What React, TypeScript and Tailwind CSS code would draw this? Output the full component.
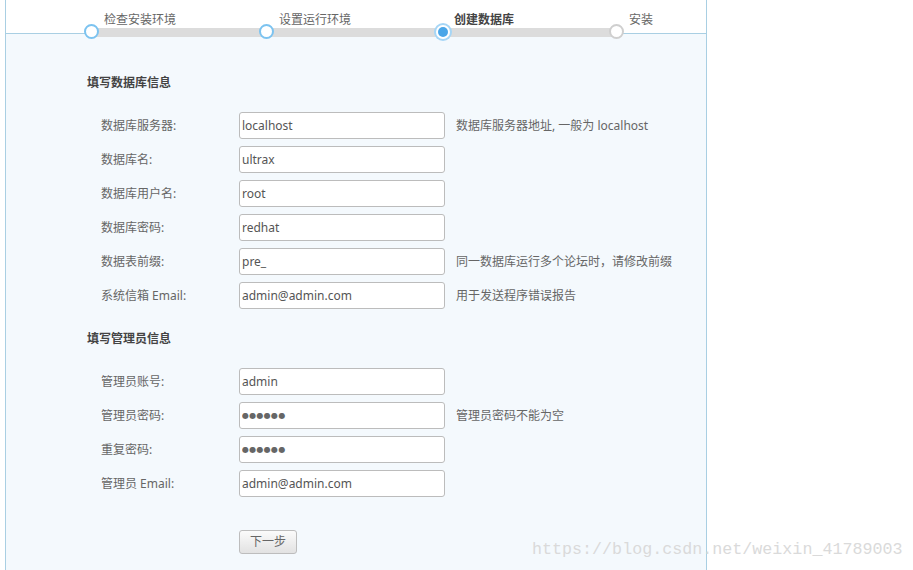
import React from 'react';

const font = { fontFamily: '"Noto Sans", "Noto Sans CJK SC", sans-serif' };

const steps = [
  { label: '检查安装环境', state: 'done' },
  { label: '设置运行环境', state: 'done' },
  { label: '创建数据库', state: 'active' },
  { label: '安装', state: 'todo' },
];

const dbRows = [
  { label: '数据库服务器:', value: 'localhost', hint: '数据库服务器地址, 一般为 localhost' },
  { label: '数据库名:', value: 'ultrax' },
  { label: '数据库用户名:', value: 'root' },
  { label: '数据库密码:', value: 'redhat' },
  { label: '数据表前缀:', value: 'pre_', hint: '同一数据库运行多个论坛时，请修改前缀' },
  { label: '系统信箱 Email:', value: 'admin@admin.com', hint: '用于发送程序错误报告' },
];

const adminRows = [
  { label: '管理员账号:', value: 'admin' },
  { label: '管理员密码:', value: '●●●●●●', password: true, hint: '管理员密码不能为空' },
  { label: '重复密码:', value: '●●●●●●', password: true },
  { label: '管理员 Email:', value: 'admin@admin.com' },
];

function StepDot({ state }: { state: string }) {
  if (state === 'active') {
    return (
      <div className="w-[18px] h-[18px] rounded-full bg-[#a6d6f6] flex items-center justify-center">
        <div className="w-[14px] h-[14px] rounded-full bg-white flex items-center justify-center">
          <div className="w-[10px] h-[10px] rounded-full bg-[#4aa6e8]" />
        </div>
      </div>
    );
  }
  return (
    <div
      className={
        'w-[15px] h-[15px] rounded-full bg-white border-2 ' +
        (state === 'done' ? 'border-[#7cc3f0]' : 'border-[#cfcfcf]')
      }
    />
  );
}

type Row = { label: string; value: string; hint?: string; password?: boolean };

function FormRow({ row }: { row: Row }) {
  return (
    <div className="flex items-center h-[27px] mb-[7px]">
      <div className="w-[138px] pl-[95px] box-content shrink-0 text-[12px] text-[#666] whitespace-nowrap">{row.label}</div>
      <input
        readOnly
        type="text"
        defaultValue={row.value}
        className={
          'w-[206px] h-[27px] shrink-0 border border-[#bcbcbc] rounded-[3px] bg-white px-[2px] outline-none ' +
          (row.password ? 'text-[8px] text-[#666] tracking-[0.3px]' : 'text-[12px] text-[#555]')
        }
        style={row.password ? { fontFamily: '"DejaVu Sans", sans-serif' } : font}
      />
      {row.hint && <div className="ml-[11px] text-[12px] text-[#666] whitespace-nowrap">{row.hint}</div>}
    </div>
  );
}

export default function App() {
  return (
    <div className="relative w-[913px] h-[570px] overflow-hidden bg-white" style={font}>
      <div className="ml-[5px] w-[702px] h-[570px] border-l border-r border-[#a9cfe3] bg-[#f4f9fd]">
        {/* step header */}
        <div className="relative h-[34px] bg-white border-b border-[#a9cfe3]">
          <div className="flex pl-[98px] pt-[12px]">
            {steps.map((s) => (
              <div
                key={s.label}
                className={
                  'w-[175px] shrink-0 text-[12px] leading-[16px] ' +
                  (s.state === 'active' ? 'font-bold text-[#444]' : 'text-[#666]')
                }
              >
                {s.label}
              </div>
            ))}
          </div>
          <div className="absolute left-[86px] top-[28px] w-[526px] h-[9px] bg-[#dcdcdc]" />
          <div className="absolute left-[78px] top-[24px]"><StepDot state="done" /></div>
          <div className="absolute left-[253px] top-[24px]"><StepDot state="done" /></div>
          <div className="absolute left-[428px] top-[23px]"><StepDot state="active" /></div>
          <div className="absolute left-[603px] top-[24px]"><StepDot state="todo" /></div>
        </div>

        <div>
          <div className="mt-[39px] pl-[81px] h-[20px] leading-[20px] text-[12px] font-bold text-[#444]">填写数据库信息</div>
          <div className="mt-[19px]">
            {dbRows.map((r) => (
              <FormRow key={r.label} row={r} />
            ))}
          </div>
          <div className="mt-[20px] pl-[81px] h-[20px] leading-[20px] text-[12px] font-bold text-[#444]">填写管理员信息</div>
          <div className="mt-[19px]">
            {adminRows.map((r) => (
              <FormRow key={r.label} row={r} />
            ))}
          </div>
          <div className="mt-[31px] pl-[233px]">
            <button className="w-[58px] h-[24px] rounded-[3px] border border-[#bdbdbd] bg-gradient-to-b from-[#fbfbfb] to-[#e2e2e2] text-[12px] text-[#666]">
              下一步
            </button>
          </div>
        </div>
      </div>
      <div
        className="absolute left-[532px] top-[540px] text-[16.7px] leading-[20px] text-[#dadada] whitespace-nowrap"
        style={{ fontFamily: '"Liberation Mono", monospace' }}
      >
        https://blog.csdn.net/weixin_41789003
      </div>
    </div>
  );
}
